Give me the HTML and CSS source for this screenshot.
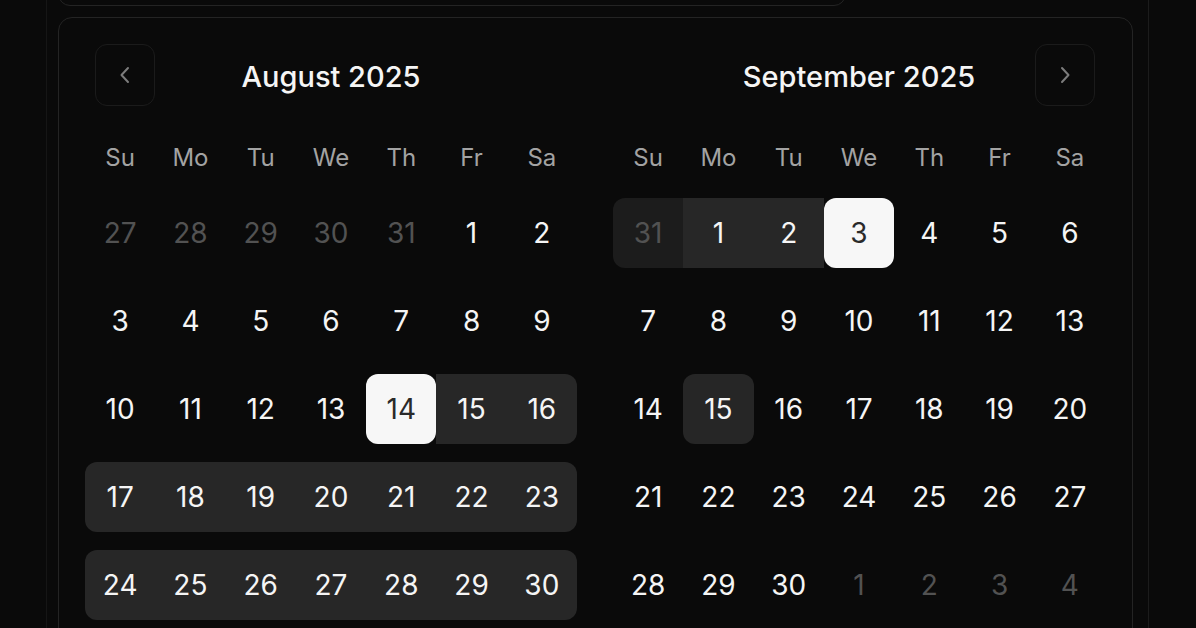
FILE: index.html
```html
<!DOCTYPE html>
<html lang="en">
<head>
    <meta charset="UTF-8">
    <meta name="viewport" content="width=device-width, initial-scale=1.0">
    <title>Date Range</title>
    <link rel="stylesheet" href="styles.css">
</head>
<body>
    <div class="sheet">
        <div class="field"></div>

        <div class="calendar">
            <!-- August -->
            <div class="month">
                <div class="month-head">
                    <button class="nav" aria-label="Previous month">
                        <svg width="14" height="22" viewBox="0 0 14 22"><path d="M10 4 L3.5 11 L10 18" /></svg>
                    </button>
                    <div class="title">August 2025</div>
                    <div class="nav-spacer"></div>
                </div>
                <div class="weekdays">
                    <span>Su</span><span>Mo</span><span>Tu</span><span>We</span><span>Th</span><span>Fr</span><span>Sa</span>
                </div>
                <div class="weeks">
                    <div class="week">
                        <span class="day outside">27</span><span class="day outside">28</span><span class="day outside">29</span><span class="day outside">30</span><span class="day outside">31</span><span class="day">1</span><span class="day">2</span>
                    </div>
                    <div class="week">
                        <span class="day">3</span><span class="day">4</span><span class="day">5</span><span class="day">6</span><span class="day">7</span><span class="day">8</span><span class="day">9</span>
                    </div>
                    <div class="week">
                        <span class="day">10</span><span class="day">11</span><span class="day">12</span><span class="day">13</span><span class="day selected">14</span><span class="day range">15</span><span class="day range end">16</span>
                    </div>
                    <div class="week">
                        <span class="day range first">17</span><span class="day range">18</span><span class="day range">19</span><span class="day range">20</span><span class="day range">21</span><span class="day range">22</span><span class="day range end">23</span>
                    </div>
                    <div class="week">
                        <span class="day range first">24</span><span class="day range">25</span><span class="day range">26</span><span class="day range">27</span><span class="day range">28</span><span class="day range">29</span><span class="day range end">30</span>
                    </div>
                </div>
            </div>

            <!-- September -->
            <div class="month">
                <div class="month-head">
                    <div class="nav-spacer"></div>
                    <div class="title">September 2025</div>
                    <button class="nav" aria-label="Next month">
                        <svg width="14" height="22" viewBox="0 0 14 22"><path d="M4 4 L10.5 11 L4 18" /></svg>
                    </button>
                </div>
                <div class="weekdays">
                    <span>Su</span><span>Mo</span><span>Tu</span><span>We</span><span>Th</span><span>Fr</span><span>Sa</span>
                </div>
                <div class="weeks">
                    <div class="week">
                        <span class="day outside range-dim first">31</span><span class="day range">1</span><span class="day range">2</span><span class="day selected">3</span><span class="day">4</span><span class="day">5</span><span class="day">6</span>
                    </div>
                    <div class="week">
                        <span class="day">7</span><span class="day">8</span><span class="day">9</span><span class="day">10</span><span class="day">11</span><span class="day">12</span><span class="day">13</span>
                    </div>
                    <div class="week">
                        <span class="day">14</span><span class="day today">15</span><span class="day">16</span><span class="day">17</span><span class="day">18</span><span class="day">19</span><span class="day">20</span>
                    </div>
                    <div class="week">
                        <span class="day">21</span><span class="day">22</span><span class="day">23</span><span class="day">24</span><span class="day">25</span><span class="day">26</span><span class="day">27</span>
                    </div>
                    <div class="week">
                        <span class="day">28</span><span class="day">29</span><span class="day">30</span><span class="day outside">1</span><span class="day outside">2</span><span class="day outside">3</span><span class="day outside">4</span>
                    </div>
                </div>
            </div>
        </div>
    </div>
</body>
</html>
```

FILE: styles.css
```css
* {
    box-sizing: border-box;
}

body {
    margin: 0;
    padding: 0;
    background-color: #0a0a0a;
    font-family: Inter, "Noto Sans", sans-serif;
    color: #f5f5f5;
    overflow: hidden;
}

.sheet {
    display: flow-root;
    margin-left: 46px;
    width: 1103px;
    height: 628px;
    padding: 0 11px;
    border-left: 1px solid #161616;
    border-right: 1px solid #1c1c1c;
}

/* bottom edge of the input above the popover */
.field {
    width: 788px;
    height: 36px;
    margin-top: -30px;
    border: 1px solid #242424;
    border-radius: 12px;
}

.calendar {
    display: flex;
    gap: 36px;
    width: 1075px;
    height: 640px;
    margin-top: 11px;
    padding: 25px 27px 0 26px;
    border: 1px solid #242424;
    border-radius: 14px;
    background-color: #0a0a0a;
}

.month {
    width: 492px;
}

.month-head {
    display: flex;
    align-items: center;
    justify-content: space-between;
    height: 64px;
    padding: 0 10px;
}

.title {
    font-size: 29px;
    font-weight: 500;
    letter-spacing: 0;
    color: #f5f5f5;
    margin-top: 2px;
}

.nav,
.nav-spacer {
    width: 60px;
    height: 62px;
}

.nav {
    display: flex;
    align-items: center;
    justify-content: center;
    padding: 0;
    background: transparent;
    border: 1px solid #1b1b1b;
    border-radius: 12px;
}

.nav path {
    fill: none;
    stroke: #7c7c7c;
    stroke-width: 2;
    stroke-linecap: round;
    stroke-linejoin: round;
}

.weekdays {
    display: grid;
    grid-template-columns: repeat(7, 1fr);
    height: 40px;
    margin-top: 30px;
    align-items: center;
    text-align: center;
    font-size: 24px;
    color: #a3a3a3;
}

.weeks {
    display: flex;
    flex-direction: column;
    gap: 18px;
    margin-top: 21px;
}

.week {
    display: grid;
    grid-template-columns: repeat(7, 1fr);
    height: 70px;
}

.day {
    display: flex;
    align-items: center;
    justify-content: center;
    font-size: 28px;
    color: #f5f5f5;
}

.day.outside {
    color: #525252;
}

.day.range {
    background-color: #272727;
}

.day.range-dim {
    background-color: #1c1c1c;
}

.day.first {
    border-radius: 12px 0 0 12px;
}

.day.end {
    border-radius: 0 12px 12px 0;
}

.day.selected {
    background-color: #f7f7f7;
    color: #2a2a2a;
    border-radius: 12px;
}

.day.today {
    background-color: #262626;
    border-radius: 12px;
}
```
